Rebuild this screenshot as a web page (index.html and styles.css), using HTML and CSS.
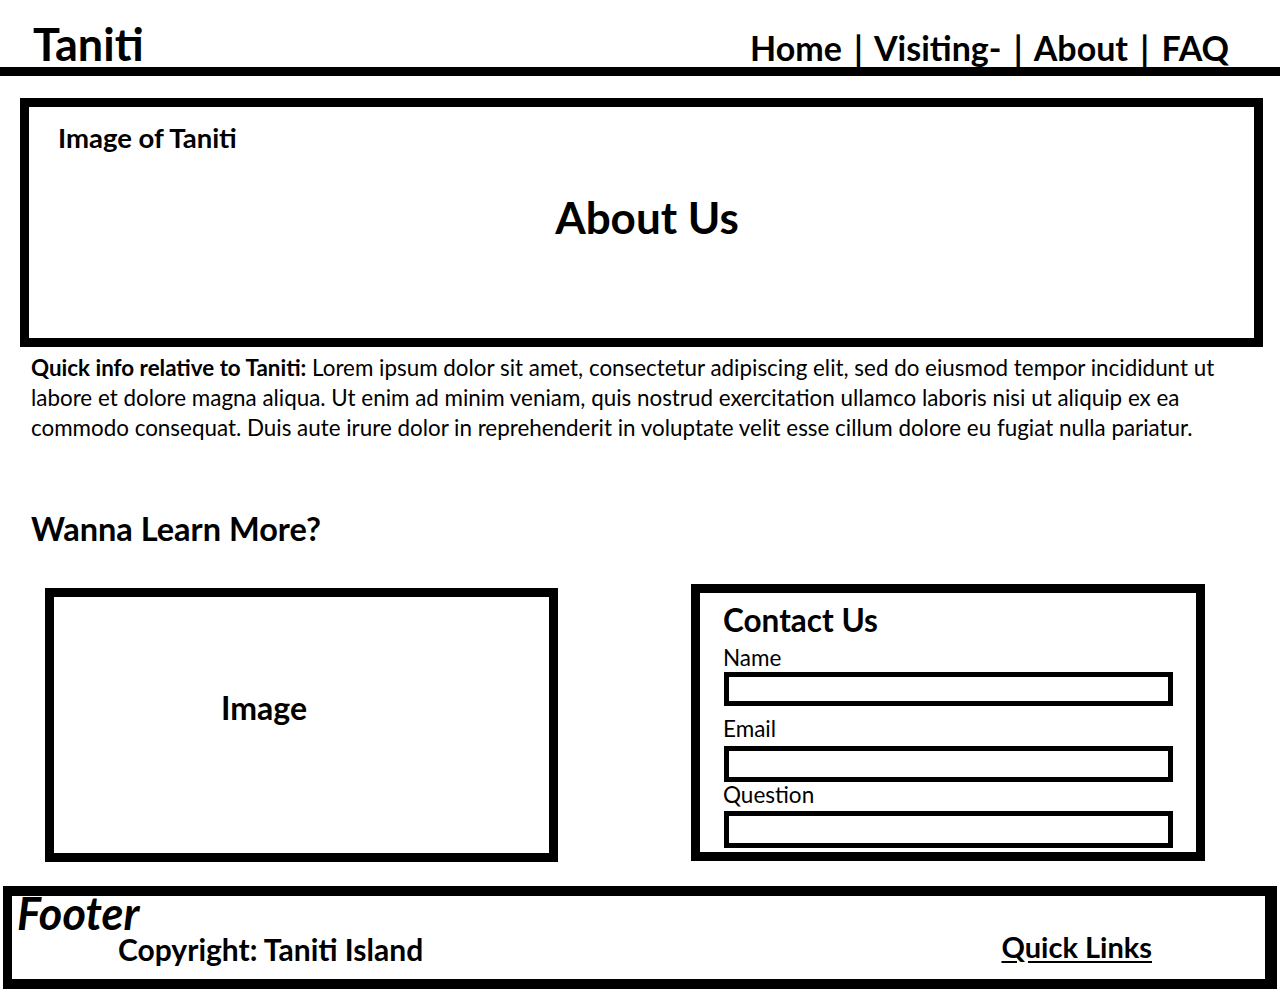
FILE: index.html
```html
<!DOCTYPE html>
<html lang="en">
<head>
<meta charset="utf-8">
<title>Taniti - About Us</title>
<link rel="stylesheet" href="styles.css">
</head>
<body>
<header class="topbar">
  <div class="brand">Taniti</div>
  <nav class="nav">
    <a href="#">Home</a> | <a href="#">Visiting-</a> | <a href="#">About</a> | <a href="#">FAQ</a>
  </nav>
</header>

<section class="hero">
  <div class="hero-label">Image of Taniti</div>
  <h1 class="hero-title">About Us</h1>
</section>

<p class="intro"><strong>Quick info relative to Taniti:</strong> Lorem ipsum dolor sit amet, consectetur adipiscing elit, sed do eiusmod tempor incididunt ut labore et dolore magna aliqua. Ut enim ad minim veniam, quis nostrud exercitation ullamco laboris nisi ut aliquip ex ea commodo consequat. Duis aute irure dolor in reprehenderit in voluptate velit esse cillum dolore eu fugiat nulla pariatur.</p>

<h2 class="learn">Wanna Learn More?</h2>

<div class="row">
  <div class="image-box"><span class="image-label">Image</span></div>
  <form class="contact">
    <h3 class="contact-title">Contact Us</h3>
    <label class="field-label label-name" for="name">Name</label>
    <input class="field field-name" id="name" type="text">
    <label class="field-label label-email" for="email">Email</label>
    <input class="field field-email" id="email" type="text">
    <label class="field-label label-question" for="question">Question</label>
    <input class="field field-question" id="question" type="text">
  </form>
</div>

<footer class="footer">
  <div class="footer-title">Footer</div>
  <div class="footer-row">
    <span class="copyright">Copyright: Taniti Island</span>
    <a class="quick-links" href="#">Quick Links</a>
  </div>
</footer>
</body>
</html>
```

FILE: styles.css
```css
* { box-sizing: border-box; }

body {
  margin: 0;
  font-family: Lato, "Open Sans", sans-serif;
  color: #000;
  background: #fff;
}

a { color: #000; text-decoration: none; }

.topbar {
  display: flex;
  justify-content: space-between;
  align-items: flex-end;
  height: 76px;
  padding: 0 51px 0 33px;
  border-bottom: 9px solid #000;
}

.brand {
  font-size: 45px;
  font-weight: 700;
  line-height: 1;
}

.nav {
  font-size: 34px;
  font-weight: 700;
  line-height: 1;
  word-spacing: 4px;
  padding-bottom: 2px;
}

.hero {
  margin: 22px 17px 0 20px;
  height: 249px;
  border: 9px solid #000;
  padding: 14px 28px 0 29px;
}

.hero-label {
  font-size: 27.5px;
  font-weight: 700;
  line-height: 1.2;
}

.hero-title {
  margin: 37px 0 0;
  text-align: center;
  font-size: 44px;
  font-weight: 700;
  line-height: 1.2;
  padding-left: 10px;
}

.intro {
  margin: 6px 0 0 31px;
  max-width: 1205px;
  font-size: 22.4px;
  line-height: 30px;
}

.intro strong { font-weight: 700; }

.learn {
  margin: 66px 0 0 31px;
  font-size: 32.5px;
  font-weight: 700;
  line-height: 1.2;
}

.row {
  display: flex;
  align-items: flex-start;
  gap: 133px;
  padding-left: 45px;
  margin-top: 36px;
}

.image-box {
  width: 513px;
  height: 274px;
  margin-top: 4px;
  border: 9px solid #000;
  padding: 92px 0 0 167px;
}

.image-label {
  font-size: 32px;
  font-weight: 700;
  line-height: 1.2;
}

.contact {
  width: 514px;
  height: 277px;
  border: 9px solid #000;
  padding: 9px 0 0 23px;
  margin: 0;
  display: flex;
  flex-direction: column;
  align-items: flex-start;
}

.contact-title {
  margin: 0;
  font-size: 31.5px;
  font-weight: 700;
  line-height: 1.2;
}

.field-label {
  display: block;
  font-size: 22.5px;
  line-height: 24px;
}

.label-name { margin-top: 6px; }
.label-email { margin-top: 11px; }
.label-question { margin-top: 1px; }

.field {
  display: block;
  width: 449px;
  margin: 0 0 0 1px;
  padding: 0;
  border: 5px solid #000;
  border-radius: 0;
  background: #fff;
  outline: none;
}

.field-name { height: 34px; margin-top: 2px; }
.field-email { height: 36px; margin-top: 5px; }
.field-question { height: 37px; margin-top: 4px; }

.footer {
  margin: 24px 3px 0 3px;
  height: 103px;
  border: 10px solid #000;
  border-left-width: 9px;
  border-right-width: 12px;
}

.footer-title {
  font-size: 45px;
  font-weight: 700;
  font-style: italic;
  line-height: 1;
  padding-left: 5px;
  margin-top: -5px;
}

.footer-row {
  display: flex;
  align-items: flex-end;
  padding-left: 106px;
  padding-right: 113px;
  margin-top: -6px;
}

.copyright {
  font-size: 30px;
  font-weight: 700;
  line-height: 1.2;
}

.quick-links {
  margin-left: auto;
  margin-bottom: 2px;
  font-size: 29px;
  font-weight: 700;
  line-height: 1.2;
  text-decoration: underline;
  text-underline-offset: 3px;
}
```
